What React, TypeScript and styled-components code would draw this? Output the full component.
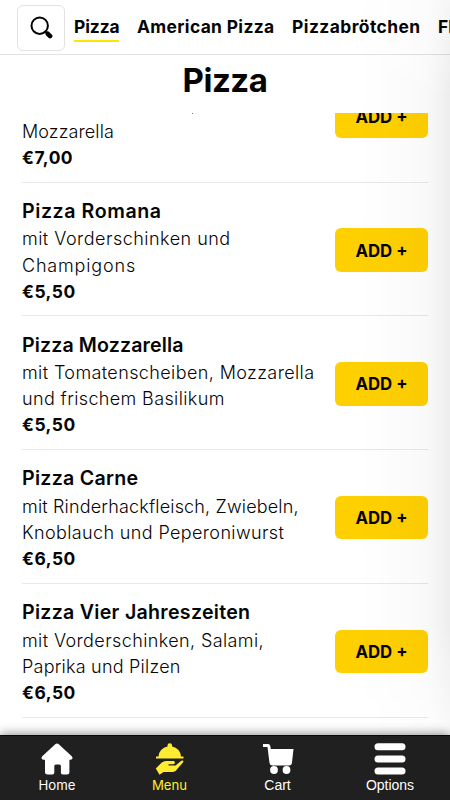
import React from 'react';
import styled, { createGlobalStyle } from 'styled-components';

const Global = createGlobalStyle`
  * { box-sizing: border-box; }
  body { margin: 0; overflow: hidden; background: #fff; font-family: Inter, "Open Sans", sans-serif; color: #050505; }
  button { font-family: inherit; color: inherit; }
`;

const Screen = styled.div`
  position: relative;
  width: 450px;
  height: 800px;
  display: flex;
  flex-direction: column;
  overflow: hidden;
  background: #fff;
`;

const TopBar = styled.header`
  flex: none;
  height: 55px;
  display: flex;
  align-items: flex-start;
  padding: 5px 0 0 17px;
  border-bottom: 1px solid #e2e2e2;
  overflow: hidden;
`;

const SearchButton = styled.button`
  flex: none;
  width: 48px;
  height: 46px;
  display: grid;
  place-items: center;
  padding: 0;
  border: 1px solid #e2e2e2;
  border-radius: 6px;
  background: #fff;
`;

const Tabs = styled.nav`
  display: flex;
  gap: 18px;
  padding: 7px 0 0 9px;
`;

const Tab = styled.a<{ $active?: boolean; $width: number; $track: number }>`
  flex: none;
  width: ${p => p.$width}px;
  height: 30px;
  font-size: 17.4px;
  font-weight: 650;
  line-height: 29px;
  letter-spacing: ${p => p.$track}px;
  white-space: nowrap;
  border-bottom: 2px solid ${p => (p.$active ? '#ffe600' : 'transparent')};
`;

const Heading = styled.h1`
  flex: none;
  height: 58px;
  margin: 0;
  padding-top: 1px;
  text-align: center;
  font-size: 33px;
  font-weight: 700;
  line-height: 48px;
  letter-spacing: -0.5px;
`;

const List = styled.main`
  flex: 1;
  min-height: 0;
  display: flex;
  flex-direction: column;
  padding: 0 22px;
  overflow: hidden;
`;

const Item = styled.article<{ $partial?: boolean }>`
  position: relative;
  flex: none;
  height: ${p => (p.$partial ? '69.5px' : '133.75px')};
  display: flex;
  justify-content: space-between;
  align-items: ${p => (p.$partial ? 'flex-start' : 'center')};
  border-bottom: 1.5px solid #e8e8e8;
`;

/* Lower tip of the text line that has scrolled under the heading. */
const ScrolledTip = styled.span`
  position: absolute;
  top: 0;
  left: 170px;
  width: 1px;
  height: 1px;
  background: #777;
`;

const Info = styled.div<{ $partial?: boolean }>`
  align-self: flex-start;
  padding-top: ${p => (p.$partial ? 5.5 : 14.3)}px;
`;

const Name = styled.h2<{ $track: number }>`
  margin: 0;
  font-size: 19.6px;
  font-weight: 570;
  line-height: 29.5px;
  letter-spacing: ${p => p.$track}px;
`;

const Line = styled.div<{ $track: number }>`
  font-size: 18px;
  font-weight: 300;
  line-height: 26.2px;
  letter-spacing: ${p => p.$track}px;
  white-space: nowrap;
`;

const Price = styled.div`
  font-size: 17.4px;
  font-weight: 650;
  line-height: 26px;
  letter-spacing: 0.5px;
`;

const AddButton = styled.button<{ $partial?: boolean }>`
  flex: none;
  width: 93px;
  height: 43.5px;
  margin-top: ${p => (p.$partial ? -18.5 : 2.6)}px;
  padding: 1px 0 0;
  border: 0;
  border-radius: 6px;
  background: #ffd000;
  font-size: 16.8px;
  font-weight: 700;
`;

const Footer = styled.footer`
  position: relative;
  flex: none;
  height: 65px;
  display: grid;
  grid-template-columns: 114px 111px 105px 120px;
  background: #202020;
  border-top: 1px solid #090909;
  box-shadow: 0 -1px 10px rgba(0, 0, 0, 0.45);
`;

const FooterLink = styled.a<{ $active?: boolean }>`
  display: flex;
  flex-direction: column;
  align-items: center;
  padding-top: 7px;
  color: ${p => (p.$active ? '#ffeb32' : '#fff')};
  font-size: 13.2px;
  line-height: 21px;
  svg { display: block; }
`;

const PlainLabel = styled.span`
  font-family: "Liberation Sans", Arial, sans-serif;
  font-size: 14px;
`;

const EdgeShade = styled.div`
  position: absolute;
  inset: 0 0 0 auto;
  width: 90px;
  pointer-events: none;
  background: linear-gradient(to right, transparent, rgba(0,0,0,.01) 40%, rgba(0,0,0,.025) 75%, rgba(0,0,0,.07));
  mask-image: linear-gradient(to bottom, rgba(0,0,0,.5), #000 100px, #000 620px, rgba(0,0,0,.25) 740px);
`;

type Text = [string, number];
const items: { name: Text; lines: Text[]; price: string }[] = [
  { name: ['Pizza Romana', 0.58], lines: [['mit Vorderschinken und', 0.48], ['Champigons', 0.83]], price: '€5,50' },
  { name: ['Pizza Mozzarella', 0.12], lines: [['mit Tomatenscheiben, Mozzarella', 0.39], ['und frischem Basilikum', 0.37]], price: '€5,50' },
  { name: ['Pizza Carne', 0.28], lines: [['mit Rinderhackfleisch, Zwiebeln,', 0.17], ['Knoblauch und Peperoniwurst', 0.37]], price: '€6,50' },
  { name: ['Pizza Vier Jahreszeiten', 0.28], lines: [['mit Vorderschinken, Salami,', 0.39], ['Paprika und Pilzen', 0.22]], price: '€6,50' },
];

const SearchIcon = () => (
  <svg width="24" height="24" viewBox="0 0 24 24" fill="none" stroke="#000" strokeLinecap="round">
    <circle cx="10.700" cy="9.700" r="8.200" strokeWidth="2" />
    <path d="M16.500 15.500l1.500 1.500" strokeWidth="2" />
    <path d="M18.800 17.800l2.300 2.300" strokeWidth="4.600" />
  </svg>
);

const HomeIcon = () => (
  <svg width="32" height="32" viewBox="0 0 32 32" fill="currentColor">
    <path d="M14.2 1.200q1.800-1.500 3.600 0L31 13.500q1.600 3-1.600 3.200h-1V29q0 2.500-2.500 2.500h-4.200q-1.800 0-1.800-1.800V23q0-1.500-1.500-1.500h-3.600q-1.500 0-1.500 1.500v6.700q0 1.800-1.800 1.800H6.800Q4 31.500 4 29V16.700H2.500Q-.4 16.500 1 13.500Z" />
  </svg>
);

const DishIcon = () => (
  <svg width="32" height="32" viewBox="0 0 32 32" fill="currentColor">
    <path d="M4.500 13.500A11.500 10.500 0 0 1 13.500 3.500V2.600a2.300 2.300 0 0 1 4.600 0v.9A11.500 10.500 0 0 1 27 13.500h2.500v2H2v-2Z" />
    <path d="M1.800 25.500L7.500 19.700Q10 17.600 13 18h7q2 1.700-.3 3.300H14.500v1.200h7l5.800-4.700q2.500-1 2 1.200l-7.500 8.800q-1 1-3 1.200H9.500L5.500 31.800Z" />
  </svg>
);

const CartIcon = () => (
  <svg width="32" height="32" viewBox="0 0 32 32" fill="currentColor">
    <path d="M1 1H6Q8 1 8.300 3L8.800 6H31.500L30 19.500Q29.700 22.500 27 22.500H10.500Q8 22.500 7.500 20L5.500 4H1Z" />
    <circle cx="12" cy="27" r="3.900" /><circle cx="24.500" cy="27" r="3.900" />
  </svg>
);

const MenuIcon = () => (
  <svg width="32" height="32" viewBox="0 0 32 32" fill="currentColor">
    <rect x="0.500" y="0.300" width="31" height="7" rx="3.500" />
    <rect x="0.500" y="12.500" width="31" height="7" rx="3.500" />
    <rect x="0.500" y="24.500" width="31" height="7" rx="3.500" />
  </svg>
);

export default function App() {
  return (
    <>
      <Global />
      <Screen>
        <TopBar>
          <SearchButton aria-label="Suche"><SearchIcon /></SearchButton>
          <Tabs>
            <Tab $active $width={45} $track={-0.1}>Pizza</Tab>
            <Tab $width={137} $track={0.35}>American Pizza</Tab>
            <Tab $width={128} $track={0.45}>Pizzabrötchen</Tab>
            <Tab $width={40} $track={0}>Fl</Tab>
          </Tabs>
        </TopBar>
        <Heading>Pizza</Heading>
        <List>
          <Item $partial>
            <ScrolledTip />
            <Info $partial>
              <Line $track={0.1}>Mozzarella</Line>
              <Price>€7,00</Price>
            </Info>
            <AddButton $partial>ADD +</AddButton>
          </Item>
          {items.map(item => (
            <Item key={item.name[0]}>
              <Info>
                <Name $track={item.name[1]}>{item.name[0]}</Name>
                {item.lines.map(([text, track]) => <Line key={text} $track={track}>{text}</Line>)}
                <Price>{item.price}</Price>
              </Info>
              <AddButton>ADD +</AddButton>
            </Item>
          ))}
        </List>
        <Footer>
          <FooterLink><HomeIcon />Home</FooterLink>
          <FooterLink $active><DishIcon />Menu</FooterLink>
          <FooterLink><CartIcon /><PlainLabel>Cart</PlainLabel></FooterLink>
          <FooterLink><MenuIcon /><PlainLabel>Options</PlainLabel></FooterLink>
        </Footer>
        <EdgeShade />
      </Screen>
    </>
  );
}
